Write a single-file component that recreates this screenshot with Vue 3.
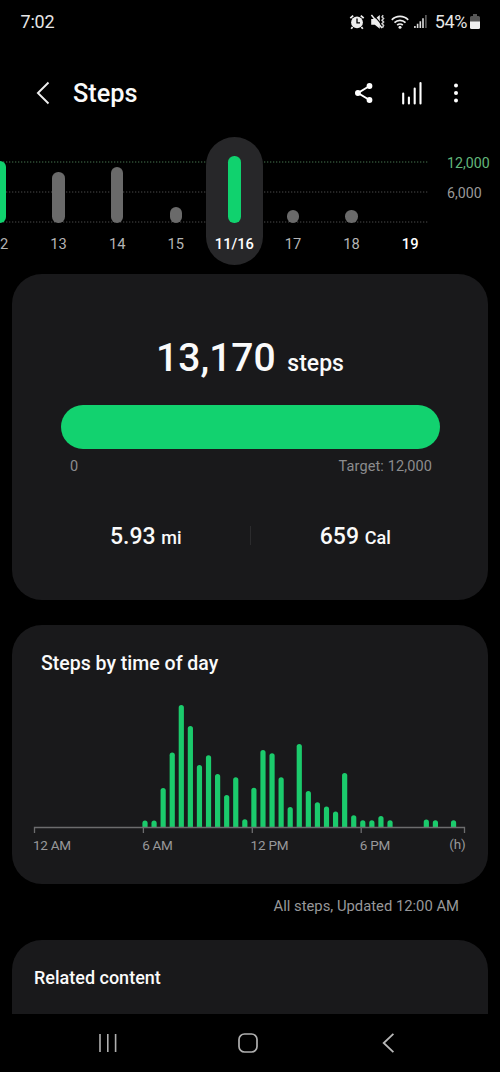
<template>
  <div class="screen">
    <header class="status">
      <span class="clock">7:02</span>
      <div class="status-icons">
        <svg width="16" height="16" viewBox="0 0 16 16">
          <circle cx="8" cy="8.4" r="5.9" fill="#eee" />
          <path d="M1.3 4.2 4.2 1.6M14.7 4.2 11.8 1.6M3.6 13 2.2 14.7M12.4 13l1.4 1.7" stroke="#eee" stroke-width="1.8" />
          <path d="M8 4.6v4.2h3" fill="none" stroke="#000" stroke-width="1.3" />
        </svg>
        <svg class="mute" width="16" height="16" viewBox="0 0 16 16">
          <path d="M1.2 5h3.6L9.8 1v13.8l-5-4H1.2z" fill="#eee" />
          <path d="M3.6.8 11 9.7" stroke="#000" stroke-width="1.1" />
          <path d="M1.4 1 12 14" stroke="#eee" stroke-width="1.5" />
          <path d="m13.2 1.2-1.2 1.7 1.6 1.7L12 6.3 13.6 8 12 9.7l1.6 1.7-1.2 2.4" fill="none" stroke="#ccc" stroke-width="1.5" />
        </svg>
        <svg class="wifi" width="18" height="14" viewBox="0 0 18 14">
          <g fill="none" stroke="#eee" stroke-width="1.7">
            <path d="M.8 4.9a11.5 11.5 0 0 1 16.4 0" />
            <path d="M3.5 7.6a7.7 7.7 0 0 1 11 0" />
            <path d="M6.2 10.2a4 4 0 0 1 5.6 0" />
          </g>
          <circle cx="9" cy="12.3" r="1.5" fill="#eee" />
        </svg>
        <svg class="signal" width="13" height="13" viewBox="0 0 13 13">
          <path d="M.9 13v-2M3.6 13V8.7M6.3 13V6.2M9 13V3.3" stroke="#ddd" stroke-width="1.6" />
          <path d="M11.9 13V0" stroke="#666" stroke-width="1.5" />
        </svg>
        <span class="percent">54%</span>
        <svg class="battery" width="10" height="15" viewBox="0 0 10 15">
          <path d="M3 0h4v2h1.5q1.5 0 1.5 1.5V8H0V3.5Q0 2 1.5 2H3z" fill="#555" />
          <path d="M0 7.6h10v5.9q0 1.5-1.5 1.5h-7Q0 15 0 13.5z" fill="#eee" />
        </svg>
      </div>
    </header>

    <div class="toolbar">
      <svg class="back" width="14" height="24" viewBox="0 0 14 24">
        <path d="M12.5 1.5 1.9 12l10.6 10.5" fill="none" stroke="#eee" stroke-width="1.9" />
      </svg>
      <h1>Steps</h1>
      <svg class="share" width="20" height="22" viewBox="0 0 20 22">
        <path d="M15.5 4 4 11l11.5 7" fill="none" stroke="#fff" stroke-width="2" />
        <circle cx="15.5" cy="4" r="2.9" fill="#fff" />
        <circle cx="3.9" cy="11" r="2.9" fill="#fff" />
        <circle cx="15.5" cy="18" r="2.9" fill="#fff" />
      </svg>
      <svg class="trend" width="22" height="24" viewBox="0 0 22 24">
        <path d="M2.2 12.5v10M7.9 16.5v6M13.7 7.5v15M19.5 2v20.5" stroke="#fff" stroke-width="2.1" stroke-linecap="round" />
      </svg>
      <svg class="more" width="6" height="22" viewBox="0 0 6 22">
        <circle v-for="y in [3.5, 11, 18.5]" :key="y" cx="3" :cy="y" r="2" fill="#fff" />
      </svg>
    </div>

    <section class="days">
      <svg class="grid" width="430" height="64" viewBox="0 0 430 64">
        <path class="goal" d="M0 2H429" />
        <path d="M0 32H429M0 62H429" />
      </svg>
      <div class="strip">
        <div v-for="d in days" :key="d.label" class="day" :class="{ selected: d.selected, today: d.today }">
          <div class="track">
            <div v-if="d.height" class="bar" :class="{ reached: d.reached }" :style="{ height: d.height + 'px' }"></div>
          </div>
          <span>{{ d.label }}</span>
        </div>
      </div>
      <div class="scale">
        <span class="goal-text">12,000</span>
        <span>6,000</span>
      </div>
    </section>

    <section class="card summary">
      <div class="total">13,170 <small>steps</small></div>
      <div class="progress"></div>
      <div class="range">
        <span>0</span>
        <span>Target: 12,000</span>
      </div>
      <div class="stats">
        <div>5.93 <small>mi</small></div>
        <div>659 <small>Cal</small></div>
      </div>
    </section>

    <section class="card hourly">
      <h2>Steps by time of day</h2>
      <svg class="chart" width="476" height="170" viewBox="12 690 476 170">
        <path v-for="b in bars" :key="b.x" :d="b.d" fill="#1bcb6c" />
        <path class="axis" d="M34.5 833v-5.5h430v5.5M143.4 827.5v5.5M252.3 827.5v5.5M361.2 827.5v5.5" />
        <text x="33" y="849.7" textLength="38">12 AM</text>
        <text x="142.3" y="849.7" textLength="30.5">6 AM</text>
        <text x="250.5" y="849.7" textLength="38">12 PM</text>
        <text x="359.8" y="849.7" textLength="30.5">6 PM</text>
        <text x="449.3" y="848.7" textLength="16.5">(h)</text>
      </svg>
    </section>

    <p class="updated">All steps, Updated 12:00 AM</p>

    <section class="card related">
      <h2>Related content</h2>
    </section>

    <nav class="navbar">
      <svg width="20" height="20" viewBox="0 0 20 20">
        <path d="M2 1v18M9.8 1v18M17.6 1v18" stroke="#b0b0b0" stroke-width="1.6" />
      </svg>
      <svg width="20" height="20" viewBox="0 0 20 20">
        <rect x="1" y="1" width="18" height="18" rx="5.5" fill="none" stroke="#b0b0b0" stroke-width="1.7" />
      </svg>
      <svg width="20" height="20" viewBox="0 0 20 20">
        <path d="M15.4.8 5.7 10l9.7 9.2" fill="none" stroke="#b8b8b8" stroke-width="1.8" />
      </svg>
    </nav>
  </div>
</template>

<script setup>
const days = [
  { label: '12', height: 62, reached: true },
  { label: '13', height: 51 },
  { label: '14', height: 55.5 },
  { label: '15', height: 15.5 },
  { label: '11/16', height: 66.5, reached: true, selected: true },
  { label: '17', height: 12.5 },
  { label: '18', height: 12.5 },
  { label: '19', height: 0, today: true }
]

// half-hour slots, starting at 6 AM
const slots = [
  6.3, 6.3, 39, 74.3, 122, 101, 62, 71.7, 53, 32, 49.7, 7.7,
  39.2, 77, 73.7, 49.7, 20, 83, 36, 24.7, 20.3, 15.3, 54, 11.7,
  6.7, 6.7, 11, 6.7, 0, 0, 0, 7.3, 6.7, 0, 6.7
]
const bars = slots
  .map((h, i) => {
    const x = 142.4 + i * 9.075
    return { x, h, d: `M${x} 827v${-(h - 2.5)}a2.6 2.6 0 0 1 5.2 0v${h - 2.5}z` }
  })
  .filter((b) => b.h > 0)
</script>

<style>
body {
  margin: 0;
  background: #000;
}
</style>

<style scoped>
.screen {
  display: flex;
  flex-direction: column;
  width: 500px;
  height: 1072px;
  overflow: hidden;
  background: #000;
  color: #fafafa;
  font-family: Roboto, sans-serif;
}
svg {
  display: block;
  flex: none;
}
h1,
h2,
p {
  margin: 0;
  font-weight: 500;
}
.status {
  display: flex;
  justify-content: space-between;
  align-items: center;
  height: 43px;
  padding: 0 20px 0 20.5px;
  font-size: 18px;
  color: #e6e6e6;
}
.clock {
  letter-spacing: -0.2px;
}
.status-icons {
  display: flex;
  align-items: center;
}
.mute {
  margin-left: 4.5px;
}
.wifi {
  margin-left: 5px;
}
.signal {
  margin-left: 5px;
}
.percent {
  margin-left: 8px;
  letter-spacing: -0.4px;
}
.battery {
  margin-left: 3px;
}
.toolbar {
  display: flex;
  align-items: center;
  height: 100px;
  padding-left: 36px;
}
.toolbar h1 {
  width: 281px;
  margin-left: 23px;
  padding-top: 2px;
  font-size: 25.3px;
  line-height: 30px;
}
.trend {
  margin-left: 27px;
}
.more {
  margin-left: 30px;
}
.days {
  position: relative;
  display: flex;
  flex: none;
  height: 131px;
  margin-top: -6px;
}
.grid {
  position: absolute;
  top: 23px;
  left: 0;
  fill: none;
  stroke: #4a4a4a;
  stroke-dasharray: 1.3 1.7;
}
.grid .goal {
  stroke: #47754f;
}
.strip {
  position: relative;
  display: flex;
  flex: none;
  width: 468.8px;
  height: 128px;
  margin-left: -29.3px;
}
.day {
  display: flex;
  flex-direction: column;
  align-items: center;
  width: 57px;
  margin: 0 0.8px;
  border-radius: 29px;
  font-size: 14.7px;
  line-height: 18px;
  color: #b4b4b4;
}
.selected {
  background: #272729;
}
.selected,
.today {
  color: #fff;
  font-weight: 500;
}
.track {
  display: flex;
  align-items: flex-end;
  height: 85.5px;
  margin-bottom: 12.5px;
}
.bar {
  width: 12.5px;
  border-radius: 6.25px;
  background: #6a6a6a;
}
.reached {
  background: #10d26e;
}
.scale {
  display: flex;
  flex-direction: column;
  gap: 12px;
  padding: 17px 0 0 7.5px;
  font-size: 14.2px;
  line-height: 18px;
  color: #999;
}
.goal-text {
  color: #62b77b;
}
.card {
  flex: none;
  box-sizing: border-box;
  margin: 0 12px;
  border-radius: 30px;
  background: #19191b;
}
.summary {
  height: 326px;
  margin-top: 6px;
  padding: 57px 48.5px 0;
}
.total {
  height: 74px;
  line-height: 54px;
  font-size: 39px;
  font-weight: 500;
  text-align: center;
}
.total small {
  margin-left: 2px;
  font-size: 23px;
}
.progress {
  height: 44px;
  border-radius: 22px;
  background: #12d26f;
}
.range {
  display: flex;
  justify-content: space-between;
  padding: 9px 7.5px 0 9.5px;
  font-size: 14.5px;
  line-height: 18px;
  color: #8c8c8e;
}
.range span:last-child {
  letter-spacing: 0.12px;
}
.stats {
  display: flex;
  margin: 43px -20px 0;
  font-size: 23px;
  font-weight: 500;
  line-height: 36px;
}
.stats div {
  flex: 1;
  height: 36px;
  text-align: center;
  text-indent: 1px;
}
.stats div + div {
  background: linear-gradient(#2b2b2d, #2b2b2d) no-repeat 0 7px / 1px 19px;
}
.stats small {
  font-size: 18px;
}
.hourly {
  height: 258.5px;
  margin-top: 25px;
  padding-top: 27px;
}
h2 {
  font-size: 19.5px;
  line-height: 24px;
}
.hourly h2 {
  padding-left: 29px;
}
.chart {
  margin-top: 14px;
}
.chart text {
  font-size: 13.5px;
  fill: #98989a;
}
.axis {
  fill: none;
  stroke: #6c6c6e;
  stroke-width: 1.3;
}
.updated {
  height: 56.5px;
  padding-right: 41px;
  font-size: 14.8px;
  font-weight: 400;
  line-height: 45px;
  text-align: right;
  color: #98989a;
}
.related {
  height: 74px;
  padding: 26px 22px 0;
  border-radius: 30px 30px 0 0;
}
.related h2 {
  font-size: 18px;
}
.navbar {
  display: flex;
  flex: 1;
  justify-content: space-between;
  align-items: center;
  padding: 0 102px 0 98px;
}
</style>
